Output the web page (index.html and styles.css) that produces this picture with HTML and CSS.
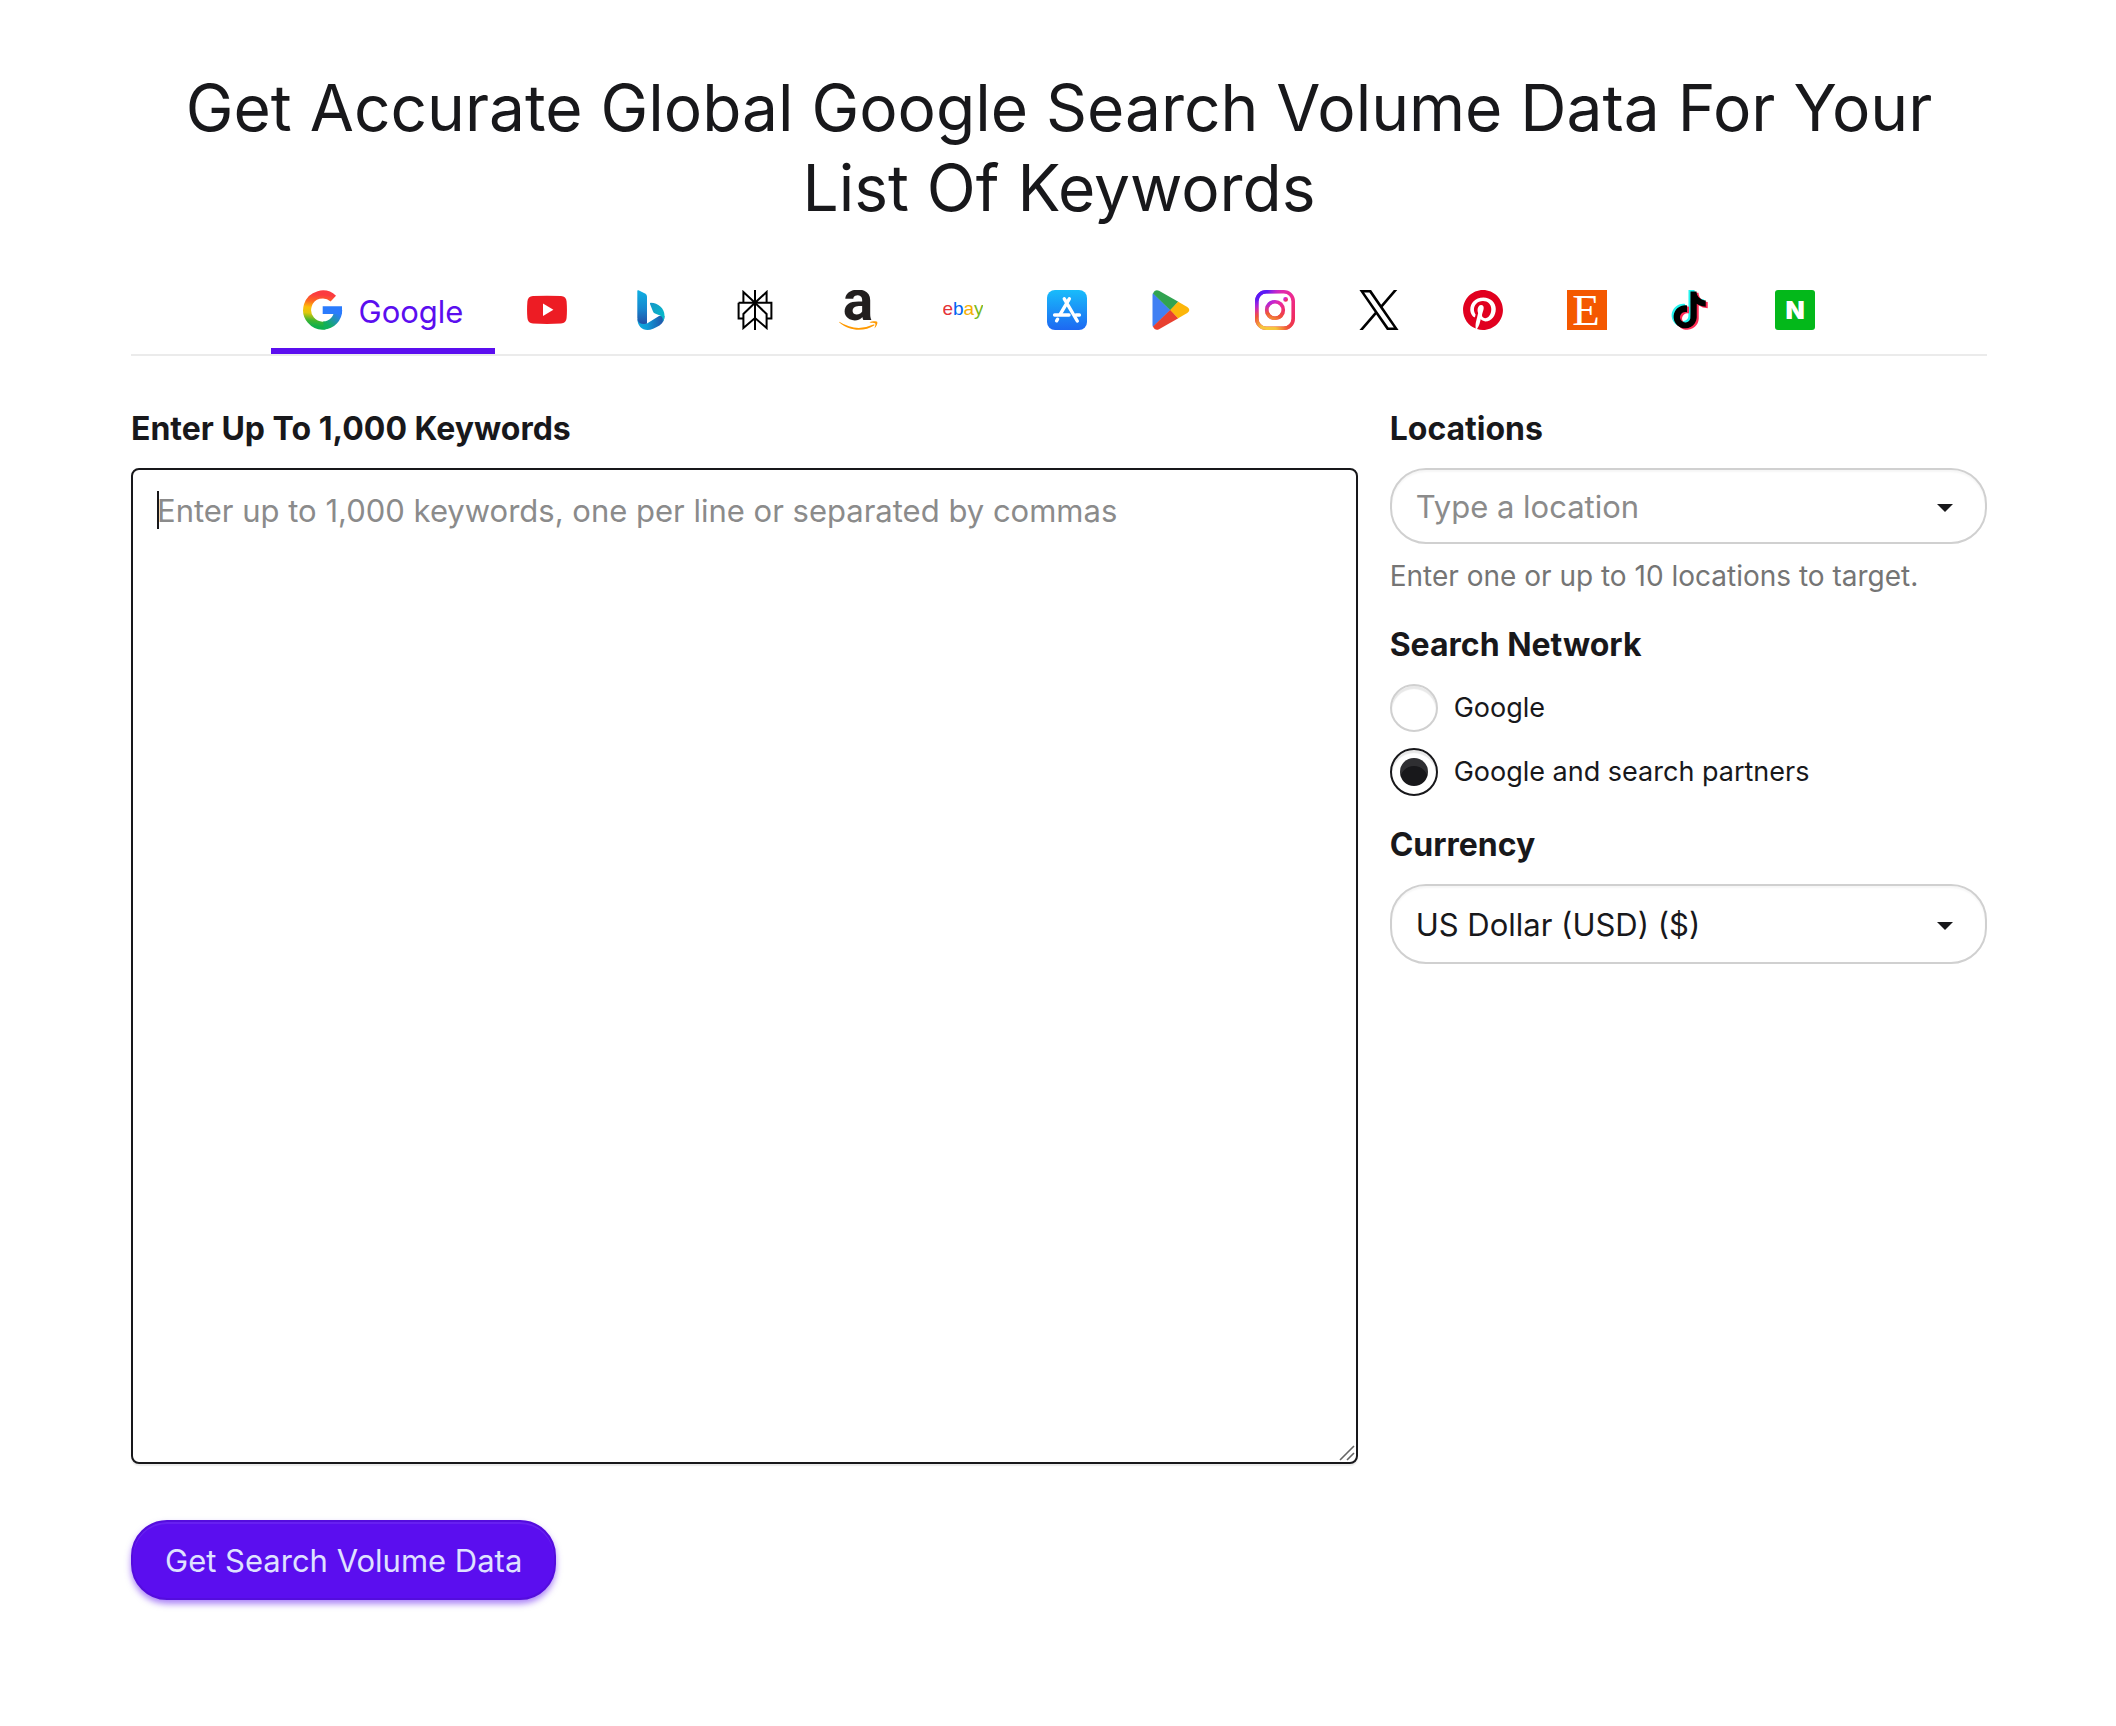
FILE: index.html
```html
<!DOCTYPE html>
<html lang="en">
  <head>
    <meta charset="utf-8">
    <meta name="viewport" content="width=device-width, initial-scale=1">
    <title>Get Accurate Global Google Search Volume Data</title>
    <link rel="stylesheet" href="styles.css">
  </head>

  <body>
    <main class="page">
      <h1 class="title">Get Accurate Global Google Search Volume Data For Your List Of Keywords</h1>

      <nav class="tabs">
        <a class="tab active" href="#google">
          <svg class="icon" viewBox="0 0 40 40" aria-hidden="true">
            <defs>
              <linearGradient id="g-left" gradientUnits="userSpaceOnUse" x1="20" y1="0" x2="16" y2="40">
                <stop offset="0.12" stop-color="#fb3b40"/>
                <stop offset="0.3" stop-color="#fd6a20"/>
                <stop offset="0.46" stop-color="#fdbf08"/>
                <stop offset="0.6" stop-color="#e0c80c"/>
                <stop offset="0.78" stop-color="#3fb530"/>
                <stop offset="0.92" stop-color="#10b04c"/>
              </linearGradient>
              <linearGradient id="g-right" gradientUnits="userSpaceOnUse" x1="24" y1="35" x2="35" y2="23">
                <stop offset="0" stop-color="#10b05a"/>
                <stop offset="0.45" stop-color="#1e98a0"/>
                <stop offset="1" stop-color="#2a7bfd"/>
              </linearGradient>
            </defs>
            <path d="M30.3 8.6A15.6 15.6 0 1 0 22 35.5" fill="none" stroke="url(#g-left)" stroke-width="8"/>
            <path d="M20.5 35.6A15.6 15.6 0 0 0 35.2 20" fill="none" stroke="url(#g-right)" stroke-width="8"/>
            <path d="M19.7 16.2H39V20.2L38.6 24H19.7Z" fill="#2a7bfd"/>
          </svg>
          <span class="tab-name">Google</span>
        </a>
        <a class="tab" href="#youtube" aria-label="YouTube">
          <svg class="icon" viewBox="0 0 40 40">
            <path d="M6 6.1Q20 5.2 34 6.1Q39.2 6.5 39.6 11.5Q40.3 20 39.6 28Q39.2 33.2 34 33.6Q20 34.4 6 33.6Q.8 33.2.4 28Q-.3 20 .4 11.5Q.8 6.5 6 6.1Z" fill="#ed1c24"/>
            <path d="M16 13.6L26.4 19.8L16 26Z" fill="#fff"/>
          </svg>
        </a>
        <a class="tab" href="#bing" aria-label="Bing">
          <svg class="icon" viewBox="0 0 40 40">
            <defs>
              <linearGradient id="b-stem" x1="0" y1="0" x2="0" y2="1">
                <stop offset="0" stop-color="#0fb0e2"/>
                <stop offset="0.55" stop-color="#1787cf"/>
                <stop offset="1" stop-color="#2250a6"/>
              </linearGradient>
              <linearGradient id="b-base" x1="0" y1="0" x2="1" y2="0">
                <stop offset="0" stop-color="#10a9dc"/>
                <stop offset="0.35" stop-color="#0f9cd8"/>
                <stop offset="1" stop-color="#234fa6"/>
              </linearGradient>
              <linearGradient id="b-flag" x1="0" y1="0" x2="1" y2="1">
                <stop offset="0" stop-color="#1697c8"/>
                <stop offset="1" stop-color="#04bfc9"/>
              </linearGradient>
            </defs>
            <path d="M6.4 29C6.4 35.5 10.8 40 16.5 40C20 40 24 38 28.5 35.5C32 33 33.6 30 33.500 26L28 26L16 33.500Z" fill="url(#b-base)"/>
            <path d="M6.3 1Q6.3-.2 7.5.3L14 3.5Q16 4.6 16 6.6V33.6Q12 34.8 8.5 33Q6.3 31.5 6.3 28Z" fill="url(#b-stem)"/>
            <path d="M19 14Q18.6 12.6 20 12.7C27 13 33.5 18 33.5 25.5C33.5 28 33 30 31.5 32C32.5 29 31.5 26.5 29 25.5L24 23.5Q22.5 22.8 22 21.4Z" fill="url(#b-flag)"/>
          </svg>
        </a>
        <a class="tab" href="#perplexity" aria-label="Perplexity">
          <svg class="icon" viewBox="0 0 40 40" fill="none" stroke="#000" stroke-width="2">
            <path d="M20 0V40M20 12.8L8.4 2V12.8M20 12.8L31.6 2V12.8M3.6 12.8H36.4V28.4H31.6M3.6 12.8V28.4H8.4"/>
            <path d="M20 12.8L8.4 24V38L20 28L31.6 38V24Z"/>
          </svg>
        </a>
        <a class="tab" href="#amazon" aria-label="Amazon">
          <svg class="icon" viewBox="0 0 40 40">
            <text class="amazon-a" x="19" y="30" text-anchor="middle">a</text>
            <path d="M.3 31.8Q17 42.5 34.5 34.6Q36 34.2 35.2 35.5C26 41.5 11 42 .3 32.6Z" fill="#ff9900"/>
            <path d="M30.5 32.4C33 31.2 37 31 38.3 32C38.8 33.5 37.5 36.5 35.5 38.5C35.8 36.5 36.8 34.5 36.3 33.4C35 32.7 33 32.8 30.5 32.4Z" fill="#ff9900"/>
          </svg>
        </a>
        <a class="tab" href="#ebay" aria-label="eBay">
          <svg class="icon" viewBox="0 0 40 40">
            <text class="ebay-text" x="20" y="25" text-anchor="middle"><tspan fill="#e53238">e</tspan><tspan fill="#0064f2">b</tspan><tspan fill="#f5af02">a</tspan><tspan fill="#76b817">y</tspan></text>
          </svg>
        </a>
        <a class="tab" href="#app-store" aria-label="App Store">
          <svg class="icon" viewBox="0 0 40 40">
            <defs>
              <linearGradient id="as-bg" x1="0" y1="0" x2="0" y2="1">
                <stop offset="0" stop-color="#18bcfb"/>
                <stop offset="1" stop-color="#1d68f2"/>
              </linearGradient>
            </defs>
            <rect width="40" height="40" rx="8" fill="url(#as-bg)"/>
            <g fill="none" stroke="#fff" stroke-width="3.4" stroke-linecap="round">
              <path d="M22.3 8.8L13.3 24.2M17.3 8.8L30.3 31"/>
              <path d="M7.6 25H22M29 25H32.4M10.6 29.2L9.6 30.8"/>
            </g>
          </svg>
        </a>
        <a class="tab" href="#google-play" aria-label="Google Play">
          <svg class="icon" viewBox="0 0 40 40">
            <path d="M2 3L19.5 20L2 37Q1.5 36 1.5 35V5Q1.5 4 2 3Z" fill="#4180f3"/>
            <path d="M2 3.6Q4-1 8 .8L27.3 11.8L19.4 20.2Z" fill="#31a350"/>
            <path d="M2 36.4Q4 41 8 39.2L27.3 28.2L19.4 19.8Z" fill="#e8402f"/>
            <path d="M27.2 11.7L36.3 17Q40.3 20 36.3 23L27.2 28.3L19.2 20Z" fill="#fcb60a"/>
          </svg>
        </a>
        <a class="tab" href="#instagram" aria-label="Instagram">
          <svg class="icon" viewBox="0 0 40 40">
            <defs>
              <linearGradient id="ig-base" x1="0" y1="0" x2="1" y2="1">
                <stop offset="0" stop-color="#c528e0"/>
                <stop offset="0.55" stop-color="#ee2a90"/>
                <stop offset="1" stop-color="#f02c4c"/>
              </linearGradient>
              <radialGradient id="ig-warm" gradientUnits="userSpaceOnUse" cx="13" cy="43" r="30">
                <stop offset="0" stop-color="#f6d03a"/>
                <stop offset="0.3" stop-color="#f6c33c"/>
                <stop offset="0.65" stop-color="#ee5a34"/>
                <stop offset="1" stop-color="#ee3a50" stop-opacity="0"/>
              </radialGradient>
              <radialGradient id="ig-cool" gradientUnits="userSpaceOnUse" cx="3" cy="0" r="24">
                <stop offset="0" stop-color="#5418fa"/>
                <stop offset="0.4" stop-color="#5c1cf4"/>
                <stop offset="1" stop-color="#c828d8" stop-opacity="0"/>
              </radialGradient>
              <g id="ig-shape">
                <rect x="1.8" y="1.8" width="36.4" height="36.4" rx="9.5" fill="none" stroke-width="3.6"/>
                <circle cx="20" cy="20" r="8.3" fill="none" stroke-width="3.6"/>
                <circle cx="30.6" cy="9.4" r="1.2" fill="none" stroke-width="2.4"/>
              </g>
            </defs>
            <use href="#ig-shape" stroke="url(#ig-base)"/>
            <use href="#ig-shape" stroke="url(#ig-warm)"/>
            <use href="#ig-shape" stroke="url(#ig-cool)"/>
          </svg>
        </a>
        <a class="tab" href="#x" aria-label="X">
          <svg class="icon" viewBox="0 0 24 24">
            <path d="M14.234 10.162 22.977 0h-2.072l-7.591 8.824L7.251 0H.258l9.168 13.343L.258 24H2.33l8.016-9.318L16.749 24h6.993zm-2.837 3.299-.929-1.329L3.076 1.56h3.182l5.965 8.532.929 1.329 7.754 11.09h-3.182z" fill="#000"/>
          </svg>
        </a>
        <a class="tab" href="#pinterest" aria-label="Pinterest">
          <svg class="icon" viewBox="0 0 24 24">
            <path d="M12.017 0C5.396 0 .029 5.367.029 11.987c0 5.079 3.158 9.417 7.618 11.162-.105-.949-.199-2.403.041-3.439.219-.937 1.406-5.957 1.406-5.957s-.359-.72-.359-1.781c0-1.663.967-2.911 2.168-2.911 1.024 0 1.518.769 1.518 1.688 0 1.029-.653 2.567-.992 3.992-.285 1.193.6 2.165 1.775 2.165 2.128 0 3.768-2.245 3.768-5.487 0-2.861-2.063-4.869-5.008-4.869-3.41 0-5.409 2.562-5.409 5.199 0 1.033.394 2.143.889 2.741.099.12.112.225.085.345-.09.375-.293 1.199-.334 1.363-.053.225-.172.271-.401.165-1.495-.69-2.433-2.878-2.433-4.646 0-3.776 2.748-7.252 7.92-7.252 4.158 0 7.392 2.967 7.392 6.923 0 4.135-2.607 7.462-6.233 7.462-1.214 0-2.354-.629-2.758-1.379l-.749 2.848c-.269 1.045-1.004 2.352-1.498 3.146 1.123.345 2.306.535 3.55.535 6.607 0 11.985-5.365 11.985-11.987C23.97 5.39 18.592.026 11.985.026L12.017 0z" fill="#e1001f"/>
          </svg>
        </a>
        <a class="tab" href="#etsy" aria-label="Etsy">
          <svg class="icon" viewBox="0 0 40 40">
            <rect width="40" height="40" fill="#f45800"/>
            <text class="etsy-e" x="19" y="35" text-anchor="middle">E</text>
          </svg>
        </a>
        <a class="tab" href="#tiktok" aria-label="TikTok">
          <svg class="icon" viewBox="0 0 40 40">
            <defs>
              <path id="tt-note" d="M12.525.02c1.31-.02 2.61-.01 3.91-.02.08 1.53.63 3.09 1.75 4.17 1.12 1.11 2.7 1.62 4.24 1.79v4.03c-1.44-.05-2.89-.35-4.2-.97-.57-.26-1.1-.59-1.62-.93-.01 2.92.01 5.84-.02 8.75-.08 1.4-.54 2.79-1.35 3.94-1.31 1.92-3.58 3.17-5.91 3.21-1.43.08-2.86-.31-4.08-1.03-2.02-1.19-3.44-3.37-3.65-5.71-.02-.5-.03-1-.01-1.49.18-1.9 1.12-3.72 2.58-4.96 1.66-1.44 3.98-2.13 6.15-1.72.02 1.48-.04 2.96-.04 4.44-.99-.32-2.15-.23-3.02.37-.63.41-1.11 1.04-1.36 1.75-.21.51-.15 1.07-.14 1.61.24 1.64 1.82 3.02 3.5 2.87 1.12-.01 2.19-.66 2.77-1.61.19-.33.4-.67.41-1.06.1-1.79.06-3.57.07-5.36.01-4.03-.01-8.05.02-12.07z"/>
            </defs>
            <use href="#tt-note" fill="#25f4ee" transform="translate(-1.8 0) scale(1.54)"/>
            <use href="#tt-note" fill="#fe2c55" transform="translate(2.2 2.8) scale(1.54)"/>
            <use href="#tt-note" fill="#000" transform="translate(.2 1.4) scale(1.54)"/>
          </svg>
        </a>
        <a class="tab" href="#naver" aria-label="Naver">
          <svg class="icon" viewBox="0 0 40 40">
            <rect width="40" height="40" rx="3" fill="#03b81a"/>
            <text class="naver-n" x="20" y="29" text-anchor="middle">N</text>
          </svg>
        </a>
      </nav>

      <form class="search-form">
        <div class="keywords">
          <label class="field-label" for="keywords">Enter Up To 1,000 Keywords</label>
          <div class="keywords-field">
            <textarea class="keywords-box" id="keywords" rows="20" placeholder="Enter up to 1,000 keywords, one per line or separated by commas"></textarea>
            <svg class="grip" viewBox="0 0 16 16" aria-hidden="true">
              <path d="M1 15L15 1M8 15L15 8" fill="none" stroke="#666" stroke-width="1.6"/>
            </svg>
          </div>
          <button class="submit" type="button">Get Search Volume Data</button>
        </div>

        <div class="options">
          <div class="option">
            <label class="field-label" for="location">Locations</label>
            <div class="dropdown">
              <input class="control" id="location" type="text" placeholder="Type a location">
            </div>
            <p class="hint">Enter one or up to 10 locations to target.</p>
          </div>

          <fieldset class="option">
            <legend class="field-label">Search Network</legend>
            <label class="choice">
              <input class="radio" type="radio" name="network">
              Google
            </label>
            <label class="choice">
              <input class="radio" type="radio" name="network" checked>
              Google and search partners
            </label>
          </fieldset>

          <div class="option">
            <label class="field-label" for="currency">Currency</label>
            <div class="dropdown">
              <select class="control currency" id="currency">
                <option>US Dollar (USD) ($)</option>
              </select>
            </div>
          </div>
        </div>
      </form>
    </main>
  </body>
</html>
```

FILE: styles.css
```css
* {
  box-sizing: border-box;
}

body {
  margin: 0;
  background: #fff;
  color: #18181b;
  font-family: Inter, "Liberation Sans", sans-serif;
  font-size: 31px;
  line-height: 48px;
}

.page {
  padding: 68px 129px 124px 131px;
}

.title {
  margin: 0 0 40px;
  font-size: 64px;
  font-weight: 400;
  line-height: 80px;
  text-align: center;
}

/* tabs */
.tabs {
  display: flex;
  justify-content: center;
  border-bottom: 2px solid #ebebeb;
}

.tab {
  display: flex;
  align-items: center;
  gap: 16px;
  padding: 18px 32px 14px;
  border-bottom: 6px solid transparent;
  color: #5b0eef;
  text-decoration: none;
}

.tab.active {
  border-bottom-color: #5b0eef;
}

.tab-name {
  height: 48px;
  line-height: 52px;
}

.icon {
  display: block;
  width: 40px;
  height: 40px;
}

.amazon-a {
  fill: #221f1f;
  font: 700 57px Roboto, sans-serif;
}

.ebay-text {
  font: 19px "Liberation Sans", Arial, sans-serif;
}

.etsy-e {
  fill: #fff;
  font: 45px "Liberation Serif", serif;
}

.naver-n {
  fill: #fff;
  font: 900 25px Inter, sans-serif;
}

/* form */
.search-form {
  display: grid;
  grid-template-columns: repeat(12, 1fr);
  column-gap: 32px;
  margin-top: 48px;
}

.keywords {
  grid-column: span 8;
}

.options {
  display: flex;
  flex-direction: column;
  gap: 24px;
  grid-column: span 4;
}

.field-label {
  display: block;
  margin-bottom: 14px;
  padding: 0;
  font-size: 32px;
  font-weight: 700;
  line-height: 50px;
}

.keywords-field {
  position: relative;
}

.keywords-box {
  display: block;
  width: 100%;
  padding: 17px 24px 15px;
  border: 2px solid #18181b;
  border-radius: 8px;
  outline: none;
  box-shadow: 0 2px 1px rgba(0, 0, 0, 0.08);
  color: inherit;
  font: inherit;
  resize: vertical;
}

.keywords-box::-webkit-resizer {
  display: none;
}

/* text cursor of the empty box */
.keywords-field::before {
  content: "";
  position: absolute;
  top: 23px;
  left: 26px;
  width: 2px;
  height: 38px;
  background: #18181b;
}

.grip {
  position: absolute;
  right: 3px;
  bottom: 3px;
  width: 16px;
  height: 16px;
  pointer-events: none;
}

.keywords-box::placeholder,
.control::placeholder {
  color: #8b8b8b;
  opacity: 1;
}

.submit {
  margin-top: 56px;
  padding: 15px 32px 13px;
  border: 2px solid #540ddd;
  border-radius: 36px;
  background: #5b0eef;
  box-shadow: inset 0 2px 0 rgba(255, 255, 255, 0.08), 0 4px 6px rgba(91, 14, 239, 0.5);
  color: #dfe1ff;
  font: inherit;
}

.option {
  min-width: 0;
  margin: 0;
  padding: 0;
  border: 0;
}

.dropdown {
  position: relative;
}

.dropdown::after {
  content: "";
  position: absolute;
  top: 50%;
  right: 34px;
  margin-top: -2px;
  border: 8px solid transparent;
  border-top-color: #18181b;
  border-bottom: 0;
  pointer-events: none;
}

.control {
  display: block;
  width: 100%;
  padding: 13px 56px 11px 24px;
  border: 2px solid #d0d0d0;
  border-radius: 36px;
  background: #fff;
  box-shadow: inset 0 2px 2px rgba(0, 0, 0, 0.04);
  color: inherit;
  font: inherit;
  appearance: none;
}

.currency {
  padding-top: 15px;
  padding-bottom: 13px;
}

.hint {
  margin: 12px 0 0;
  color: #757575;
  font-size: 28px;
  line-height: 40px;
}

.choice {
  display: flex;
  align-items: center;
  gap: 16px;
  font-size: 27px;
}

.choice + .choice {
  margin-top: 16px;
}

.radio {
  flex: none;
  width: 48px;
  height: 48px;
  margin: 0;
  border: 2px solid #d0d0d0;
  border-radius: 50%;
  background: #fff;
  box-shadow: inset 0 3px 1px rgba(0, 0, 0, 0.09);
  appearance: none;
}

.radio:checked {
  display: grid;
  place-items: center;
  border-color: #18181b;
}

.radio:checked::before {
  content: "";
  width: 28px;
  height: 28px;
  border-radius: 50%;
  background: #18181b;
  box-shadow: inset 0 8px 0 rgba(255, 255, 255, 0.1);
}
```
